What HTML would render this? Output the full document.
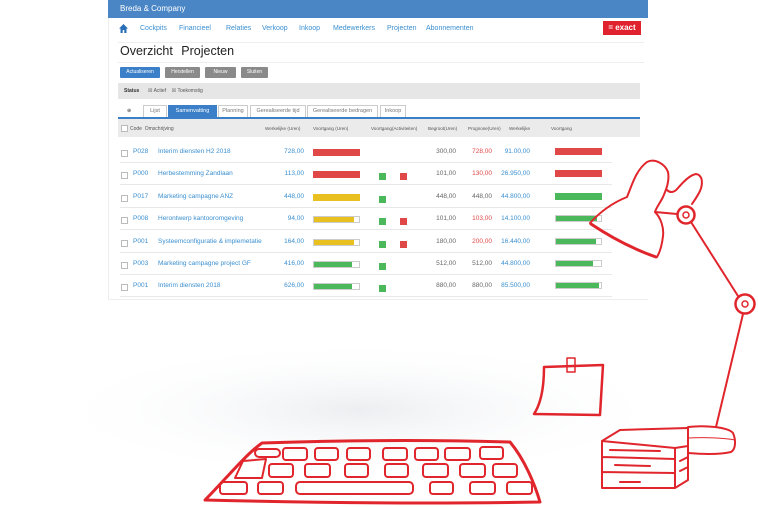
<!DOCTYPE html>
<html><head><meta charset="utf-8"><style>
*{margin:0;padding:0;box-sizing:border-box}
body{width:758px;height:507px;background:#fff;position:relative;overflow:hidden;font-family:"Liberation Sans",Arial,sans-serif}
.a{position:absolute;white-space:nowrap}
#panel{position:absolute;left:108px;top:0;width:540px;height:300px;background:#fff;border-left:1px solid #eee;border-bottom:1px solid #eee}
.blue{color:#3a8fd0}.red{color:#e04040}.grey{color:#666}
.btn{position:absolute;top:67px;height:11px;font-size:5px;color:#fff;text-align:center;line-height:11px;border-radius:1px}
.tab{position:absolute;top:105px;height:12px;font-size:5.5px;color:#777;border:1px solid #ccc;border-bottom:none;background:#fff;text-align:center;line-height:11px}
.bar{position:absolute;height:7px;border:1px solid #ccc;background:#fff}
.bar i{display:block;height:100%}
.sq{position:absolute;width:7px;height:7px}
.cb{position:absolute;width:7px;height:7px;border:1px solid #bbb;background:#fff}
.hr{position:absolute;left:120px;width:492px;height:1px;background:#e8e8e8}
.t{font-size:6.5px}
</style></head><body>
<svg class="a" style="left:0;top:0" width="758" height="507">
<defs><radialGradient id="g" cx="50%" cy="50%" r="50%"><stop offset="0" stop-color="#eceef1"/><stop offset="1" stop-color="#fff" stop-opacity="0"/></radialGradient></defs>
<ellipse cx="360" cy="410" rx="320" ry="70" fill="url(#g)"/>
</svg>
<div id="panel"></div>
<div class="a" style="left:108px;top:0;width:540px;height:18px;background:#4a86c5"></div>
<div class="a" style="left:120px;top:4px;font-size:8px;color:#fff">Breda &amp; Company</div>
<svg class="a" style="left:119px;top:24px" width="9" height="9"><path d="M4.5 0L0 4.5h1.5V9h2.2V6h1.6v3h2.2V4.5H9z" fill="#2a6fb8"/></svg>
<div class="a blue" style="left:140px;top:25px;font-size:7px">Cockpits</div>
<div class="a blue" style="left:179px;top:25px;font-size:7px">Financieel</div>
<div class="a blue" style="left:226px;top:25px;font-size:7px">Relaties</div>
<div class="a blue" style="left:262px;top:25px;font-size:7px">Verkoop</div>
<div class="a blue" style="left:299px;top:25px;font-size:7px">Inkoop</div>
<div class="a blue" style="left:333px;top:25px;font-size:7px">Medewerkers</div>
<div class="a blue" style="left:387px;top:25px;font-size:7px">Projecten</div>
<div class="a blue" style="left:426px;top:25px;font-size:7px">Abonnementen</div>
<div class="a" style="left:603px;top:21px;width:38px;height:14px;background:#e0212e;color:#fff;font-size:8px;font-weight:bold;text-align:center;line-height:14px">= exact</div>
<div class="a" style="left:118px;top:42px;width:526px;height:1px;background:#eee"></div>
<div class="a" style="left:120px;top:44px;font-size:12.5px;color:#222;word-spacing:5px">Overzicht Projecten</div>
<div class="a" style="left:118px;top:62px;width:526px;height:1px;background:#eee"></div>
<div class="btn" style="left:120px;width:40px;background:#3a7fc8">Actualiseren</div>
<div class="btn" style="left:165px;width:35px;background:#8a8a8a">Herstellen</div>
<div class="btn" style="left:205px;width:31px;background:#8a8a8a">Nieuw</div>
<div class="btn" style="left:241px;width:27px;background:#8a8a8a">Sluiten</div>
<div class="a" style="left:118px;top:83px;width:522px;height:16px;background:#e6e6e6"></div>
<div class="a" style="left:124px;top:88px;font-size:5px;color:#333;font-weight:bold">Status</div>
<div class="a" style="left:148px;top:88px;font-size:5px;color:#555">☒ Actief &nbsp; &nbsp;☒ Toekomstig</div>
<div class="a" style="left:127px;top:108px;font-size:5px;color:#333">⊕</div>
<div class="tab" style="left:143px;width:24px">Lijst</div>
<div class="tab" style="left:168px;width:49px;background:#3a7fc8;color:#fff;border-color:#3a7fc8">Samenvatting</div>
<div class="tab" style="left:218px;width:30px">Planning</div>
<div class="tab" style="left:250px;width:56px">Gerealiseerde tijd</div>
<div class="tab" style="left:307px;width:71px">Gerealiseerde bedragen</div>
<div class="tab" style="left:380px;width:26px">Inkoop</div>
<div class="a" style="left:118px;top:117px;width:522px;height:2px;background:#3a7fc8"></div>
<div class="a" style="left:118px;top:119px;width:522px;height:18px;background:#ebebeb"></div>
<div class="cb" style="left:121px;top:125px"></div>
<div class="a" style="top:126px;left:130px;font-size:5px;color:#555">Code &nbsp;Omschrijving</div>
<div class="a" style="top:126px;left:265px;font-size:4.6px;color:#555">Werkelijke (Uren)</div>
<div class="a" style="top:126px;left:313px;font-size:4.6px;color:#555">Voortgang (Uren)</div>
<div class="a" style="top:126px;left:371px;font-size:4.6px;color:#555">Voortgang(Activiteiten)</div>
<div class="a" style="top:126px;left:428px;font-size:4.6px;color:#555">Begroot(Uren)</div>
<div class="a" style="top:126px;left:468px;font-size:4.6px;color:#555">Prognose(Uren)</div>
<div class="a" style="top:126px;left:509px;font-size:4.6px;color:#555">Werkelijke</div>
<div class="a" style="top:126px;left:551px;font-size:4.6px;color:#555">Voortgang</div>
<div id="rows"></div>
<script>
var R=[["P028","Interim diensten H2 2018","728,00","r",100,0,0,"300,00","728,00","r","91.00,00","r",100],
["P000","Herbestemming Zandlaan","113,00","r",100,1,1,"101,00","130,00","r","26.950,00","r",100],
["P017","Marketing campagne ANZ","448,00","y",100,1,0,"448,00","448,00","g","44.800,00","g",100],
["P008","Herontwerp kantooromgeving","94,00","y",88,1,1,"101,00","103,00","r","14.100,00","g",92],
["P001","Systeemconfiguratie &amp; implemetatie","164,00","y",88,1,1,"180,00","200,00","r","16.440,00","g",88],
["P003","Marketing campagne project GF","416,00","g",84,1,0,"512,00","512,00","g","44.800,00","g",82],
["P001","Interim diensten 2018","626,00","g",84,1,0,"880,00","880,00","g","85.500,00","g",95]];
var C={r:"#e04848",y:"#e8c020",g:"#4cb85c"},h="";
R.forEach(function(r,i){var y=150+i*22.4;
h+='<div class="cb" style="left:121px;top:'+(y)+'px"></div>';
h+='<div class="a blue t" style="left:133px;top:'+(y-2)+'px">'+r[0]+'</div>';
h+='<div class="a blue t" style="left:158px;top:'+(y-2)+'px">'+r[1]+'</div>';
h+='<div class="a blue t" style="left:250px;width:54px;text-align:right;top:'+(y-2)+'px">'+r[2]+'</div>';
h+='<div class="bar" style="left:313px;width:47px;top:'+(y-1)+'px;'+(r[4]==100?'border-color:'+C[r[3]]:'')+'"><i style="width:'+r[4]+'%;background:'+C[r[3]]+'"></i></div>';
if(r[5])h+='<div class="sq" style="left:379px;top:'+(y+1)+'px;background:#4cb85c"></div>';
if(r[6])h+='<div class="sq" style="left:400px;top:'+(y+1)+'px;background:#e04848"></div>';
h+='<div class="a grey t" style="left:420px;width:36px;text-align:right;top:'+(y-2)+'px">'+r[7]+'</div>';
h+='<div class="a t" style="left:456px;width:36px;text-align:right;top:'+(y-2)+'px;color:'+(r[9]=="r"?"#e04848":"#666")+'">'+r[8]+'</div>';
h+='<div class="a blue t" style="left:490px;width:40px;text-align:right;top:'+(y-2)+'px">'+r[10]+'</div>';
h+='<div class="bar" style="left:555px;width:47px;top:'+(y-2)+'px;'+(r[12]==100?'border-color:'+C[r[11]]:'')+'"><i style="width:'+r[12]+'%;background:'+C[r[11]]+'"></i></div>';
h+='<div class="hr" style="top:'+(y+12)+'px"></div>';});
document.getElementById("rows").outerHTML=h;
</script>
<svg class="a" style="left:0;top:0" width="758" height="507" fill="none" stroke="#e0262c" stroke-linecap="round" stroke-linejoin="round">
<!-- lamp shade -->
<path d="M590 223C600 212 612 203 627 197C632 185 636 170 647 162C655 158 665 164 668 172C670 182 665 192 663 197C660 203 656 208 655 212C661 218 664 228 663 236C662 245 660 252 657 257" stroke-width="2"/>
<path d="M591 224C612 238 636 250 656 257" stroke-width="3"/>
<path d="M667 190C670 193 674 193 678 188C684 181 690 175 696 174C703 175 703 184 700 191C697 197 694 201 692 204" stroke-width="2"/>
<path d="M655 212L677 214" stroke-width="2"/>
<circle cx="686" cy="215" r="8.5" stroke-width="2.5"/><circle cx="686" cy="215" r="3" stroke-width="1.5"/>
<path d="M691 222L738 296" stroke-width="2"/>
<circle cx="745" cy="304" r="9.5" stroke-width="2.5"/><circle cx="745" cy="304" r="3" stroke-width="1.5"/>
<path d="M743 314L716 427" stroke-width="2"/>
<!-- base -->
<path d="M688 427C705 425 728 427 733 433C736 440 736 449 731 452C718 455 700 454 688 453" stroke-width="2"/>
<path d="M688 438C705 437 725 438 735 440" stroke-width="1"/>
<!-- books -->
<path d="M602 441L620 430L688 428L688 446L675 448Z" stroke-width="2"/>
<path d="M602 441L602 488L675 488L688 480L688 446M602 457L675 459M602 472L675 473M675 448L675 488M680 461L688 457M680 471L688 467M610 450L660 451M615 465L650 466M620 482L640 482" stroke-width="2"/>
<!-- note -->
<path d="M544 367L603 365L600 415L534 414C540 405 544 390 544 367Z" stroke-width="2.5"/>
<rect x="567" y="358" width="8" height="14" stroke-width="1.5"/>
<!-- keyboard -->
<path d="M205 500C225 480 245 455 262 443C350 440 440 440 510 442C525 460 535 485 540 502C430 504 320 503 205 500Z" stroke-width="3"/>
<g stroke-width="2">
<rect x="255" y="449" width="25" height="8" rx="4"/>
<rect x="283" y="448" width="24" height="12" rx="3"/>
<rect x="315" y="448" width="23" height="12" rx="3"/>
<rect x="347" y="448" width="23" height="12" rx="3"/>
<rect x="383" y="448" width="24" height="12" rx="3"/>
<rect x="415" y="448" width="23" height="12" rx="3"/>
<rect x="445" y="448" width="25" height="12" rx="3"/>
<rect x="480" y="447" width="23" height="12" rx="3"/>
<path d="M243 461L266 459L262 478L235 478Z"/>
<rect x="269" y="464" width="24" height="13" rx="3"/>
<rect x="305" y="464" width="25" height="13" rx="3"/>
<rect x="345" y="464" width="23" height="13" rx="3"/>
<rect x="385" y="464" width="23" height="13" rx="3"/>
<rect x="423" y="464" width="25" height="13" rx="3"/>
<rect x="460" y="464" width="25" height="13" rx="3"/>
<rect x="493" y="464" width="24" height="13" rx="3"/>
<rect x="220" y="482" width="27" height="12" rx="3"/>
<rect x="258" y="482" width="25" height="12" rx="3"/>
<rect x="296" y="482" width="117" height="12" rx="4"/>
<rect x="430" y="482" width="23" height="12" rx="3"/>
<rect x="470" y="482" width="25" height="12" rx="3"/>
<rect x="507" y="482" width="25" height="12" rx="3"/>
</g>
</svg>
</body></html>
